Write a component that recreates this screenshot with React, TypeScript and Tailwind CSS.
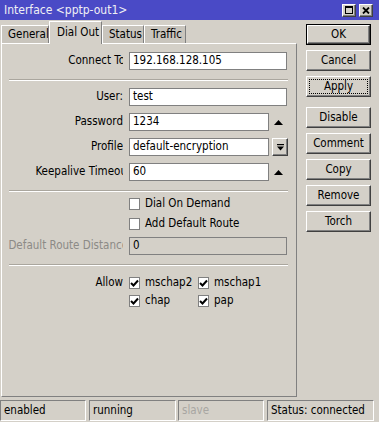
import React from "react";

const font =
  "font-['DejaVu_Sans_Condensed','DejaVu_Sans',sans-serif] font-stretch-condensed";

const raised =
  "border border-t-white border-l-white border-r-[#404040] border-b-[#404040] shadow-[inset_-1px_-1px_0_#808080]";

function UpArrow() {
  return (
    <svg width="9" height="5" viewBox="0 0 9 5">
      <polygon points="0,5 9,5 4.5,0" fill="#000" />
    </svg>
  );
}

function Check() {
  return (
    <svg width="9" height="9" viewBox="0 0 9 9">
      <polyline points="1,4 3.5,6.5 8,1.5" fill="none" stroke="#000" strokeWidth="2" />
    </svg>
  );
}

function Box({ checked }: { checked?: boolean }) {
  return (
    <div className="flex h-[12px] w-[11px] shrink-0 items-center justify-center border border-[#808080] bg-white">
      {checked && <Check />}
    </div>
  );
}

// labels are right aligned; long ones run past the column and get cut at its edge
function Row({
  label,
  inner = "w-[121px]",
  labelClass = "",
  children,
}: {
  label: string;
  inner?: string;
  labelClass?: string;
  children: React.ReactNode;
}) {
  return (
    <div className="flex h-[18px] items-center">
      <div className={`flex w-[121px] shrink-0 overflow-hidden whitespace-nowrap ${labelClass}`}>
        <div className={`shrink-0 text-right ${inner}`}>{label}</div>
      </div>
      <div className="ml-[6px] flex items-center">{children}</div>
    </div>
  );
}

function Input({ value, w = "w-[158px]" }: { value: string; w?: string }) {
  return (
    <div className={`flex h-[18px] items-center border border-[#808080] bg-white pl-[3px] text-black ${w}`}>
      {value}
    </div>
  );
}

function Separator({ className }: { className: string }) {
  return <div className={`ml-[7px] h-[2px] w-[279px] border-t border-[#aaa69e] border-b border-b-white ${className}`} />;
}

const tabs = [
  { name: "General", w: "w-[48px]" },
  { name: "Dial Out", w: "w-[53px]", active: true },
  { name: "Status", w: "w-[42px]" },
  { name: "Traffic", w: "w-[42px]" },
];

const buttons = ["OK", "Cancel", "Apply", "Disable", "Comment", "Copy", "Remove", "Torch"];

export default function App() {
  return (
    <div className={`flex h-[422px] w-[379px] flex-col overflow-hidden bg-[#d4d0c8] text-[11.5px] text-black ${font}`}>
      {/* Title bar */}
      <div className="flex h-[20px] shrink-0 items-center justify-between bg-[#4a4ac6] pl-[4px] pr-[6px]">
        <span className="text-[12px] text-[#f0f0f4]">Interface &lt;pptp-out1&gt;</span>
        <div className="flex gap-[3px]">
          <div className={`flex h-[13px] w-[14px] items-center justify-center bg-[#d4d0c8] ${raised}`}>
            <div className="h-[8px] w-[8px] border border-t-2 border-black" />
          </div>
          <div className={`flex h-[13px] w-[14px] items-center justify-center bg-[#d4d0c8] ${raised}`}>
            <svg width="8" height="7" viewBox="0 0 8 7">
              <path d="M1 0.5 L7 6.5 M7 0.5 L1 6.5" stroke="#000" strokeWidth="1.8" />
            </svg>
          </div>
        </div>
      </div>

      <div className="flex h-[377px] shrink-0">
        {/* Left: tabs + panel */}
        <div className="flex w-[297px] flex-col pl-[1px]">
          <div className="flex h-[23px] items-end">
            {tabs.map((t) =>
              t.active ? (
                <div
                  key={t.name}
                  className={`relative z-10 -mb-px flex h-[23px] items-center border-t border-l border-r border-t-white border-l-white border-r-[#808080] bg-[#d4d0c8] pb-[1px] pl-[7px] text-[11.5px] ${t.w}`}
                >
                  {t.name}
                </div>
              ) : (
                <div
                  key={t.name}
                  className={`flex h-[18px] items-center overflow-hidden whitespace-nowrap border-t border-l border-r border-t-white border-l-white border-r-[#808080] bg-[#c9c5bd] pl-[6px] text-[11.5px] ${t.w}`}
                >
                  {t.name}
                </div>
              )
            )}
          </div>

          <div className="flex h-[354px] flex-col border border-t-white border-l-white border-r-[#808080] border-b-[#808080] pt-[8px]">
            <Row label="Connect To" inner="w-[123px]">
              <Input value="192.168.128.105" />
            </Row>
            <Separator className="mt-[9px]" />
            <div className="mt-[7px] flex flex-col gap-[7px]">
              <Row label="User:">
                <Input value="test" />
              </Row>
              <Row label="Password">
                <Input value="1234" w="w-[140px]" />
                <div className="flex w-[18px] justify-center">
                  <UpArrow />
                </div>
              </Row>
              <Row label="Profile">
                <Input value="default-encryption" w="w-[140px]" />
                <div className={`ml-[3px] flex h-[18px] w-[16px] items-center justify-center bg-[#d4d0c8] ${raised}`}>
                  <svg width="7" height="7" viewBox="0 0 7 7">
                    <rect x="0" y="0" width="7" height="1.2" fill="#000" />
                    <polygon points="0,2.5 7,2.5 3.5,6.5" fill="#000" />
                  </svg>
                </div>
              </Row>
              <Row label="Keepalive Timeout" inner="w-[129px]">
                <Input value="60" w="w-[140px]" />
                <div className="flex w-[18px] justify-center">
                  <UpArrow />
                </div>
              </Row>
            </div>
            <Separator className="mt-[9px]" />
            <div className="mt-[3px] flex flex-col gap-[2px] pl-[127px]">
              <div className="flex h-[18px] items-center">
                <Box />
                <span className="ml-[5px]">Dial On Demand</span>
              </div>
              <div className="flex h-[18px] items-center">
                <Box />
                <span className="ml-[5px]">Add Default Route</span>
              </div>
            </div>
            <div className="mt-[4px]">
              <Row label="Default Route Distance" inner="w-[126px]" labelClass="text-[#8c8a86]">
                <div className="flex h-[18px] w-[158px] items-center border border-[#808080] bg-[#d4d0c8] pl-[3px]">
                  0
                </div>
              </Row>
            </div>
            <Separator className="mt-[9px]" />
            <div className="mt-[8px] flex flex-col">
              <Row label="Allow">
                <div className="flex w-[69px] items-center">
                  <Box checked />
                  <span className="ml-[5px]">mschap2</span>
                </div>
                <div className="flex items-center">
                  <Box checked />
                  <span className="ml-[5px]">mschap1</span>
                </div>
              </Row>
              <div className="flex h-[18px] items-center pl-[127px]">
                <div className="flex w-[69px] items-center">
                  <Box checked />
                  <span className="ml-[5px]">chap</span>
                </div>
                <div className="flex items-center">
                  <Box checked />
                  <span className="ml-[5px]">pap</span>
                </div>
              </div>
            </div>
          </div>
        </div>

        {/* Right: buttons */}
        <div className="ml-[9px] flex w-[65px] flex-col gap-[5px] pt-[4px] text-[11.5px]">
          {buttons.map((b) => {
            if (b === "OK")
              return (
                <div key={b} className="h-[21px] border border-black">
                  <div className={`flex h-full items-center justify-center ${raised}`}>{b}</div>
                </div>
              );
            if (b === "Apply")
              return (
                <div key={b} className={`mb-[5px] flex h-[21px] p-[2px] ${raised}`}>
                  <div className="flex flex-1 items-center justify-center border border-dotted border-black">
                    {b}
                  </div>
                </div>
              );
            return (
              <div key={b} className={`flex h-[21px] items-center justify-center ${raised}`}>
                {b}
              </div>
            );
          })}
        </div>
      </div>

      {/* Status bar */}
      <div className="mt-[3px] flex h-[21px] shrink-0">
        <div className="flex w-[86px] items-center border border-t-[#808080] border-l-[#808080] border-b-white border-r-white pl-[3px]">
          enabled
        </div>
        <div className="ml-[3px] flex w-[87px] items-center border border-t-[#808080] border-l-[#808080] border-b-white border-r-white pl-[3px]">
          running
        </div>
        <div className="ml-[2px] flex w-[86px] items-center border border-t-[#808080] border-l-[#808080] border-b-white border-r-white pl-[3px] text-[#a8a6a2]">
          slave
        </div>
        <div className="ml-[3px] flex w-[107px] items-center border border-t-[#808080] border-l-[#808080] border-b-white border-r-white pl-[3px]">
          Status: connected
        </div>
      </div>
    </div>
  );
}
